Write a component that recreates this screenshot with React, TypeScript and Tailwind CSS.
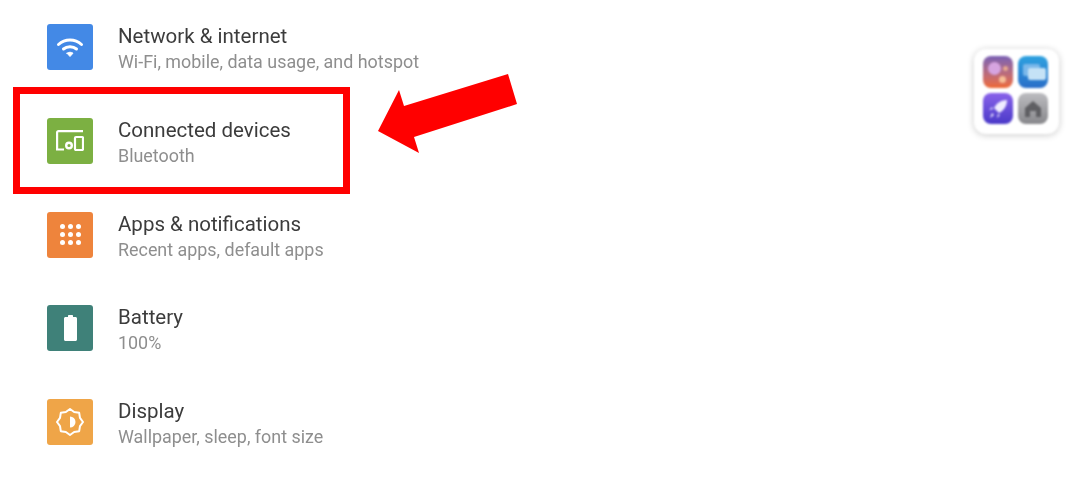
const font = "font-['Roboto',sans-serif]";

const WifiIcon = () => (
  <svg className="blur-[0.3px]" width="28" height="22" viewBox="0 0 28 22" fill="none" stroke="#fff" strokeWidth="3" strokeLinecap="round">
    <path d="M2.5 8.5C9 2.5 19 2.5 25.5 8.5" />
    <path d="M7.5 13C11 10 17 10 20.5 13" />
    <path d="M11 17.2L14 20.5L17 17.2C15.2 15.9 12.8 15.9 11 17.2Z" fill="#fff" strokeWidth="1" />
  </svg>
);

const DevicesIcon = () => (
  <svg className="blur-[0.3px]" width="28" height="21" viewBox="0 0 28 21" fill="none" stroke="#fff" strokeWidth="2.2">
    <path d="M27 1.100H2.500C1.600 1.100 1.100 1.600 1.100 2.500V19.500H8" />
    <circle cx="13" cy="15.500" r="2.800" strokeWidth="2.400" />
    <rect x="19" y="7" width="8" height="13" rx="1" />
  </svg>
);

const AppsIcon = () => (
  <div className="grid grid-cols-3 gap-[3px] blur-[0.3px]">
    {Array.from({ length: 9 }).map((_, i) => (
      <div key={i} className="w-[5px] h-[5px] rounded-full bg-white" />
    ))}
  </div>
);

const BatteryIcon = () => (
  <svg className="blur-[0.3px]" width="13" height="26" viewBox="0 0 13 26" fill="#fff">
    <path d="M4 1C4 .4 4.400 0 5 0H8C8.600 0 9 .4 9 1V2H11.500C12.300 2 13 2.700 13 3.500V24.500C13 25.300 12.300 26 11.500 26H1.500C.7 26 0 25.300 0 24.500V3.500C0 2.700 .7 2 1.500 2H4Z" />
  </svg>
);

// eight pointed outline, same as the android brightness glyph
const starPoints = Array.from({ length: 16 })
  .map((_, i) => {
    const r = i % 2 === 0 ? 13 : 10.8;
    const a = (i * Math.PI) / 8 - Math.PI / 2;
    return `${(14 + r * Math.cos(a)).toFixed(2)},${(14 + r * Math.sin(a)).toFixed(2)}`;
  })
  .join(" ");

const DisplayIcon = () => (
  <svg className="blur-[0.3px]" width="28" height="28" viewBox="0 0 28 28" fill="none" stroke="#fff" strokeWidth="2" strokeLinejoin="round">
    <polygon points={starPoints} />
    <path d="M14 8.500A5.500 5.500 0 0 1 14 19.500Z" fill="#fff" stroke="none" />
  </svg>
);

const rows = [
  { title: "Network & internet", sub: "Wi-Fi, mobile, data usage, and hotspot", bg: "bg-[#4389e6]", icon: <WifiIcon /> },
  { title: "Connected devices", sub: "Bluetooth", bg: "bg-[#7cb042]", icon: <DevicesIcon /> },
  { title: "Apps & notifications", sub: "Recent apps, default apps", bg: "bg-[#ee843c]", icon: <AppsIcon /> },
  { title: "Battery", sub: "100%", bg: "bg-[#3f8179]", icon: <BatteryIcon /> },
  { title: "Display", sub: "Wallpaper, sleep, font size", bg: "bg-[#efa548]", icon: <DisplayIcon /> },
];

const SettingsRow = ({ title, sub, bg, icon }: (typeof rows)[number]) => (
  <div className="flex items-start h-[46px]">
    <div className={`w-[46px] h-[46px] rounded-[3px] flex items-center justify-center shrink-0 ${bg}`}>{icon}</div>
    <div className="ml-[25px] blur-[0.4px] whitespace-nowrap">
      <div className="text-[20.5px] leading-[26px] text-[#3c3c3c] -mt-[1px]">{title}</div>
      <div className="text-[17.9px] leading-[26px] text-[#8e8e8e]">{sub}</div>
    </div>
  </div>
);

const AppCluster = () => (
  <div className="w-[85px] h-[85px] mt-[49px] rounded-[12px] bg-white shadow-[0_1px_7px_rgba(0,0,0,0.22)] grid grid-cols-[30px_30px] grid-rows-[32px_31px] gap-x-[5px] gap-y-[5px] pl-[9px] pt-[7px] blur-[1px]">
    <div className="rounded-[8px] bg-gradient-to-b from-[#7a5fb4] to-[#f0692f] relative overflow-hidden">
      <div className="absolute left-[5px] top-[6px] w-[13px] h-[13px] rounded-full bg-[#d6a4e0]" />
      <div className="absolute left-[20px] top-[10px] w-[5px] h-[5px] rounded-full bg-[#e8a890]" />
      <div className="absolute left-[16px] top-[20px] w-[7px] h-[7px] rounded-full bg-[#f6bd96]" />
    </div>
    <div className="rounded-[8px] bg-gradient-to-b from-[#2ea2e0] to-[#2a6ec8] relative overflow-hidden">
      <div className="absolute left-[5px] top-[8px] w-[17px] h-[12px] rounded-[2px] bg-[#7bb8ea]" />
      <div className="absolute left-[10px] top-[12px] w-[18px] h-[12px] rounded-[2px] bg-[#c5e2f6]" />
    </div>
    <div className="rounded-[8px] bg-gradient-to-b from-[#8a62ea] to-[#4a38c8] flex items-center justify-center">
      <svg width="22" height="22" viewBox="0 0 22 22" fill="#f0ecff">
        <path d="M20 2C14 2 9.500 5 7 10L12 15C17 12.500 20 8 20 2Z" />
        <path d="M6 11L2 12L5 9ZM11 16L10 20L13 17Z" />
        <path d="M5 15L7 17L3 20Z" />
      </svg>
    </div>
    <div className="rounded-[8px] bg-gradient-to-b from-[#bcbcc0] to-[#88888c] flex items-center justify-center">
      <svg width="20" height="18" viewBox="0 0 20 18" fill="#5f5f63">
        <path d="M10 1L18 8V17H13V11H7V17H2V8Z" />
      </svg>
    </div>
  </div>
);

export default function App() {
  return (
    <div className={`relative w-[1092px] h-[486px] overflow-hidden bg-white ${font}`}>
      <div className="flex justify-between pl-[47px] pr-[33px]">
        <div className="flex flex-col gap-[47.75px] pt-[24px]">
          {rows.map((r) => (
            <SettingsRow key={r.title} {...r} />
          ))}
        </div>
        <AppCluster />
      </div>

      <div className="absolute left-[13px] top-[87px] w-[337px] h-[107px] border-[7px] border-[#ff0000]" />
      <svg className="absolute left-0 top-0" width="1092" height="486" fill="#ff0000">
        <polygon points="508,74 517,104 414,137 419,153 378,131 399,90 404,106" />
      </svg>
    </div>
  );
}
